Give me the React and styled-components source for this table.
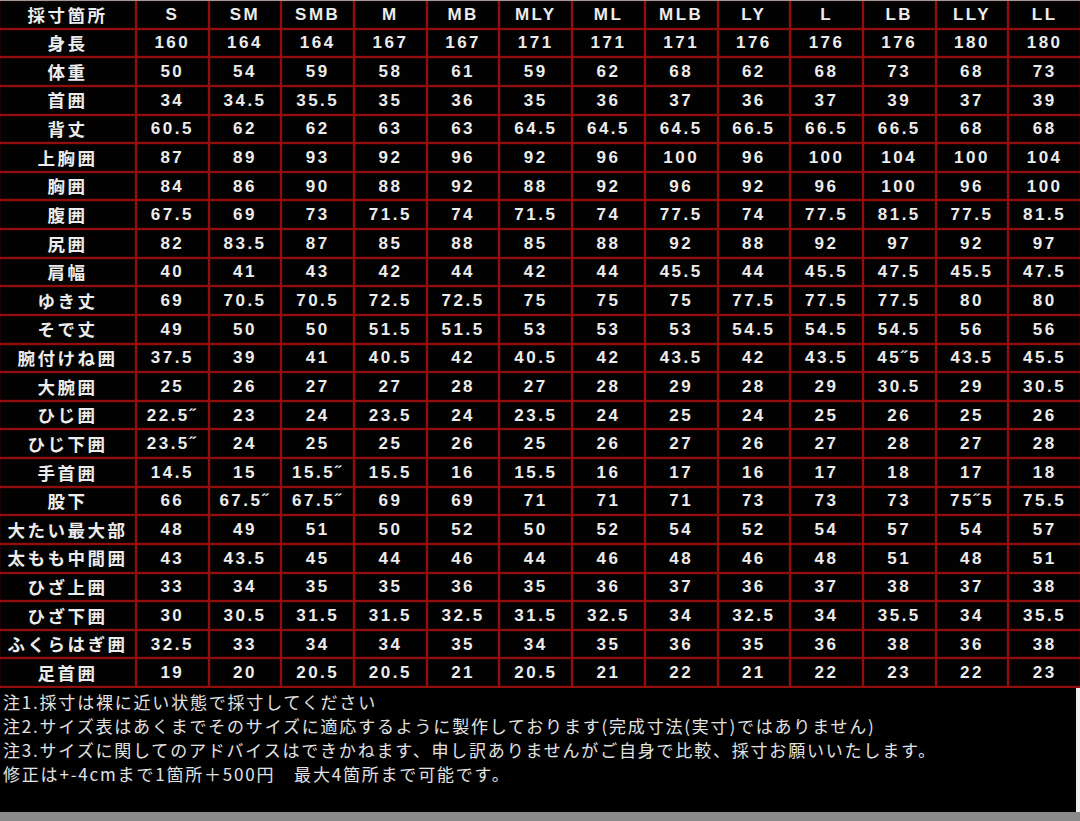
import { createGlobalStyle } from "styled-components";
import styled from "styled-components";

const GlobalStyle = createGlobalStyle`
  html, body {
    margin: 0;
    padding: 0;
    background: #8a8a8a;
  }
`;

const sizes = ["S", "SM", "SMB", "M", "MB", "MLY", "ML", "MLB", "LY", "L", "LB", "LLY", "LL"];

const rows = [
  ["身長", "160 164 164 167 167 171 171 171 176 176 176 180 180"],
  ["体重", "50 54 59 58 61 59 62 68 62 68 73 68 73"],
  ["首囲", "34 34.5 35.5 35 36 35 36 37 36 37 39 37 39"],
  ["背丈", "60.5 62 62 63 63 64.5 64.5 64.5 66.5 66.5 66.5 68 68"],
  ["上胸囲", "87 89 93 92 96 92 96 100 96 100 104 100 104"],
  ["胸囲", "84 86 90 88 92 88 92 96 92 96 100 96 100"],
  ["腹囲", "67.5 69 73 71.5 74 71.5 74 77.5 74 77.5 81.5 77.5 81.5"],
  ["尻囲", "82 83.5 87 85 88 85 88 92 88 92 97 92 97"],
  ["肩幅", "40 41 43 42 44 42 44 45.5 44 45.5 47.5 45.5 47.5"],
  ["ゆき丈", "69 70.5 70.5 72.5 72.5 75 75 75 77.5 77.5 77.5 80 80"],
  ["そで丈", "49 50 50 51.5 51.5 53 53 53 54.5 54.5 54.5 56 56"],
  ["腕付けね囲", "37.5 39 41 40.5 42 40.5 42 43.5 42 43.5 45˝5 43.5 45.5"],
  ["大腕囲", "25 26 27 27 28 27 28 29 28 29 30.5 29 30.5"],
  ["ひじ囲", "22.5˝ 23 24 23.5 24 23.5 24 25 24 25 26 25 26"],
  ["ひじ下囲", "23.5˝ 24 25 25 26 25 26 27 26 27 28 27 28"],
  ["手首囲", "14.5 15 15.5˝ 15.5 16 15.5 16 17 16 17 18 17 18"],
  ["股下", "66 67.5˝ 67.5˝ 69 69 71 71 71 73 73 73 75˝5 75.5"],
  ["大たい最大部", "48 49 51 50 52 50 52 54 52 54 57 54 57"],
  ["太もも中間囲", "43 43.5 45 44 46 44 46 48 46 48 51 48 51"],
  ["ひざ上囲", "33 34 35 35 36 35 36 37 36 37 38 37 38"],
  ["ひざ下囲", "30 30.5 31.5 31.5 32.5 31.5 32.5 34 32.5 34 35.5 34 35.5"],
  ["ふくらはぎ囲", "32.5 33 34 34 35 34 35 36 35 36 38 36 38"],
  ["足首囲", "19 20 20.5 20.5 21 20.5 21 22 21 22 23 22 23"],
];

const notes = [
  "注1.採寸は裸に近い状態で採寸してください",
  "注2.サイズ表はあくまでそのサイズに適応するように製作しております(完成寸法(実寸)ではありません)",
  "注3.サイズに関してのアドバイスはできかねます、申し訳ありませんがご自身で比較、採寸お願いいたします。",
  "修正は+-4cmまで1箇所＋500円　最大4箇所まで可能です。",
];

const Page = styled.div`
  width: 1080px;
  height: 821px;
  display: flex;
  flex-direction: column;
  background: #8a8a8a;
  overflow: hidden;
`;

const Chart = styled.div`
  display: grid;
  grid-template-columns: 135px repeat(13, 1fr);
  grid-template-rows: repeat(24, 1fr);
  gap: 2px;
  background: #940d0d;
  border-top: 1px solid #9a9a9a;
  border-bottom: 2px solid #940d0d;
  box-sizing: border-box;
  height: 688px;
  flex: 0 0 688px;
`;

const Cell = styled.div`
  background: #020202;
  color: #ececec;
  display: flex;
  align-items: center;
  justify-content: center;
  font-family: ${({ $label }) =>
    $label
      ? '"Noto Sans CJK JP", "Noto Sans", sans-serif'
      : '"Liberation Sans", Arial, sans-serif'};
  font-weight: 700;
  font-size: ${({ $label }) => ($label ? "17.5px" : "17px")};
  letter-spacing: 2.5px;
  white-space: nowrap;
  line-height: 1;
  box-shadow: inset 0 0 2px rgba(160, 20, 20, 0.6);
`;

const Notes = styled.div`
  flex: 0 0 124px;
  background: #000;
  border-right: 4px solid #efefef;
  padding: 2px 0 0 3px;
  box-sizing: border-box;
  display: flex;
  flex-direction: column;
`;

const NoteLine = styled.div`
  color: #e2e2e2;
  font-family: "Noto Sans CJK JP", "Noto Sans", sans-serif;
  font-size: 17px;
  line-height: 24px;
  white-space: nowrap;
  letter-spacing: 1.8px;
`;

const Strip = styled.div`
  flex: 1;
  background: #8a8a8a;
`;

export default function App() {
  return (
    <>
      <GlobalStyle />
      <Page>
        <Chart>
          <Cell $label>採寸箇所</Cell>
          {sizes.map((s) => (
            <Cell key={s}>{s}</Cell>
          ))}
          {rows.map(([label, vals]) => [
            <Cell $label key={label}>
              {label}
            </Cell>,
            ...vals.split(" ").map((v, i) => <Cell key={label + i}>{v}</Cell>),
          ])}
        </Chart>
        <Notes>
          {notes.map((n) => (
            <NoteLine key={n}>{n}</NoteLine>
          ))}
        </Notes>
        <Strip />
      </Page>
    </>
  );
}
